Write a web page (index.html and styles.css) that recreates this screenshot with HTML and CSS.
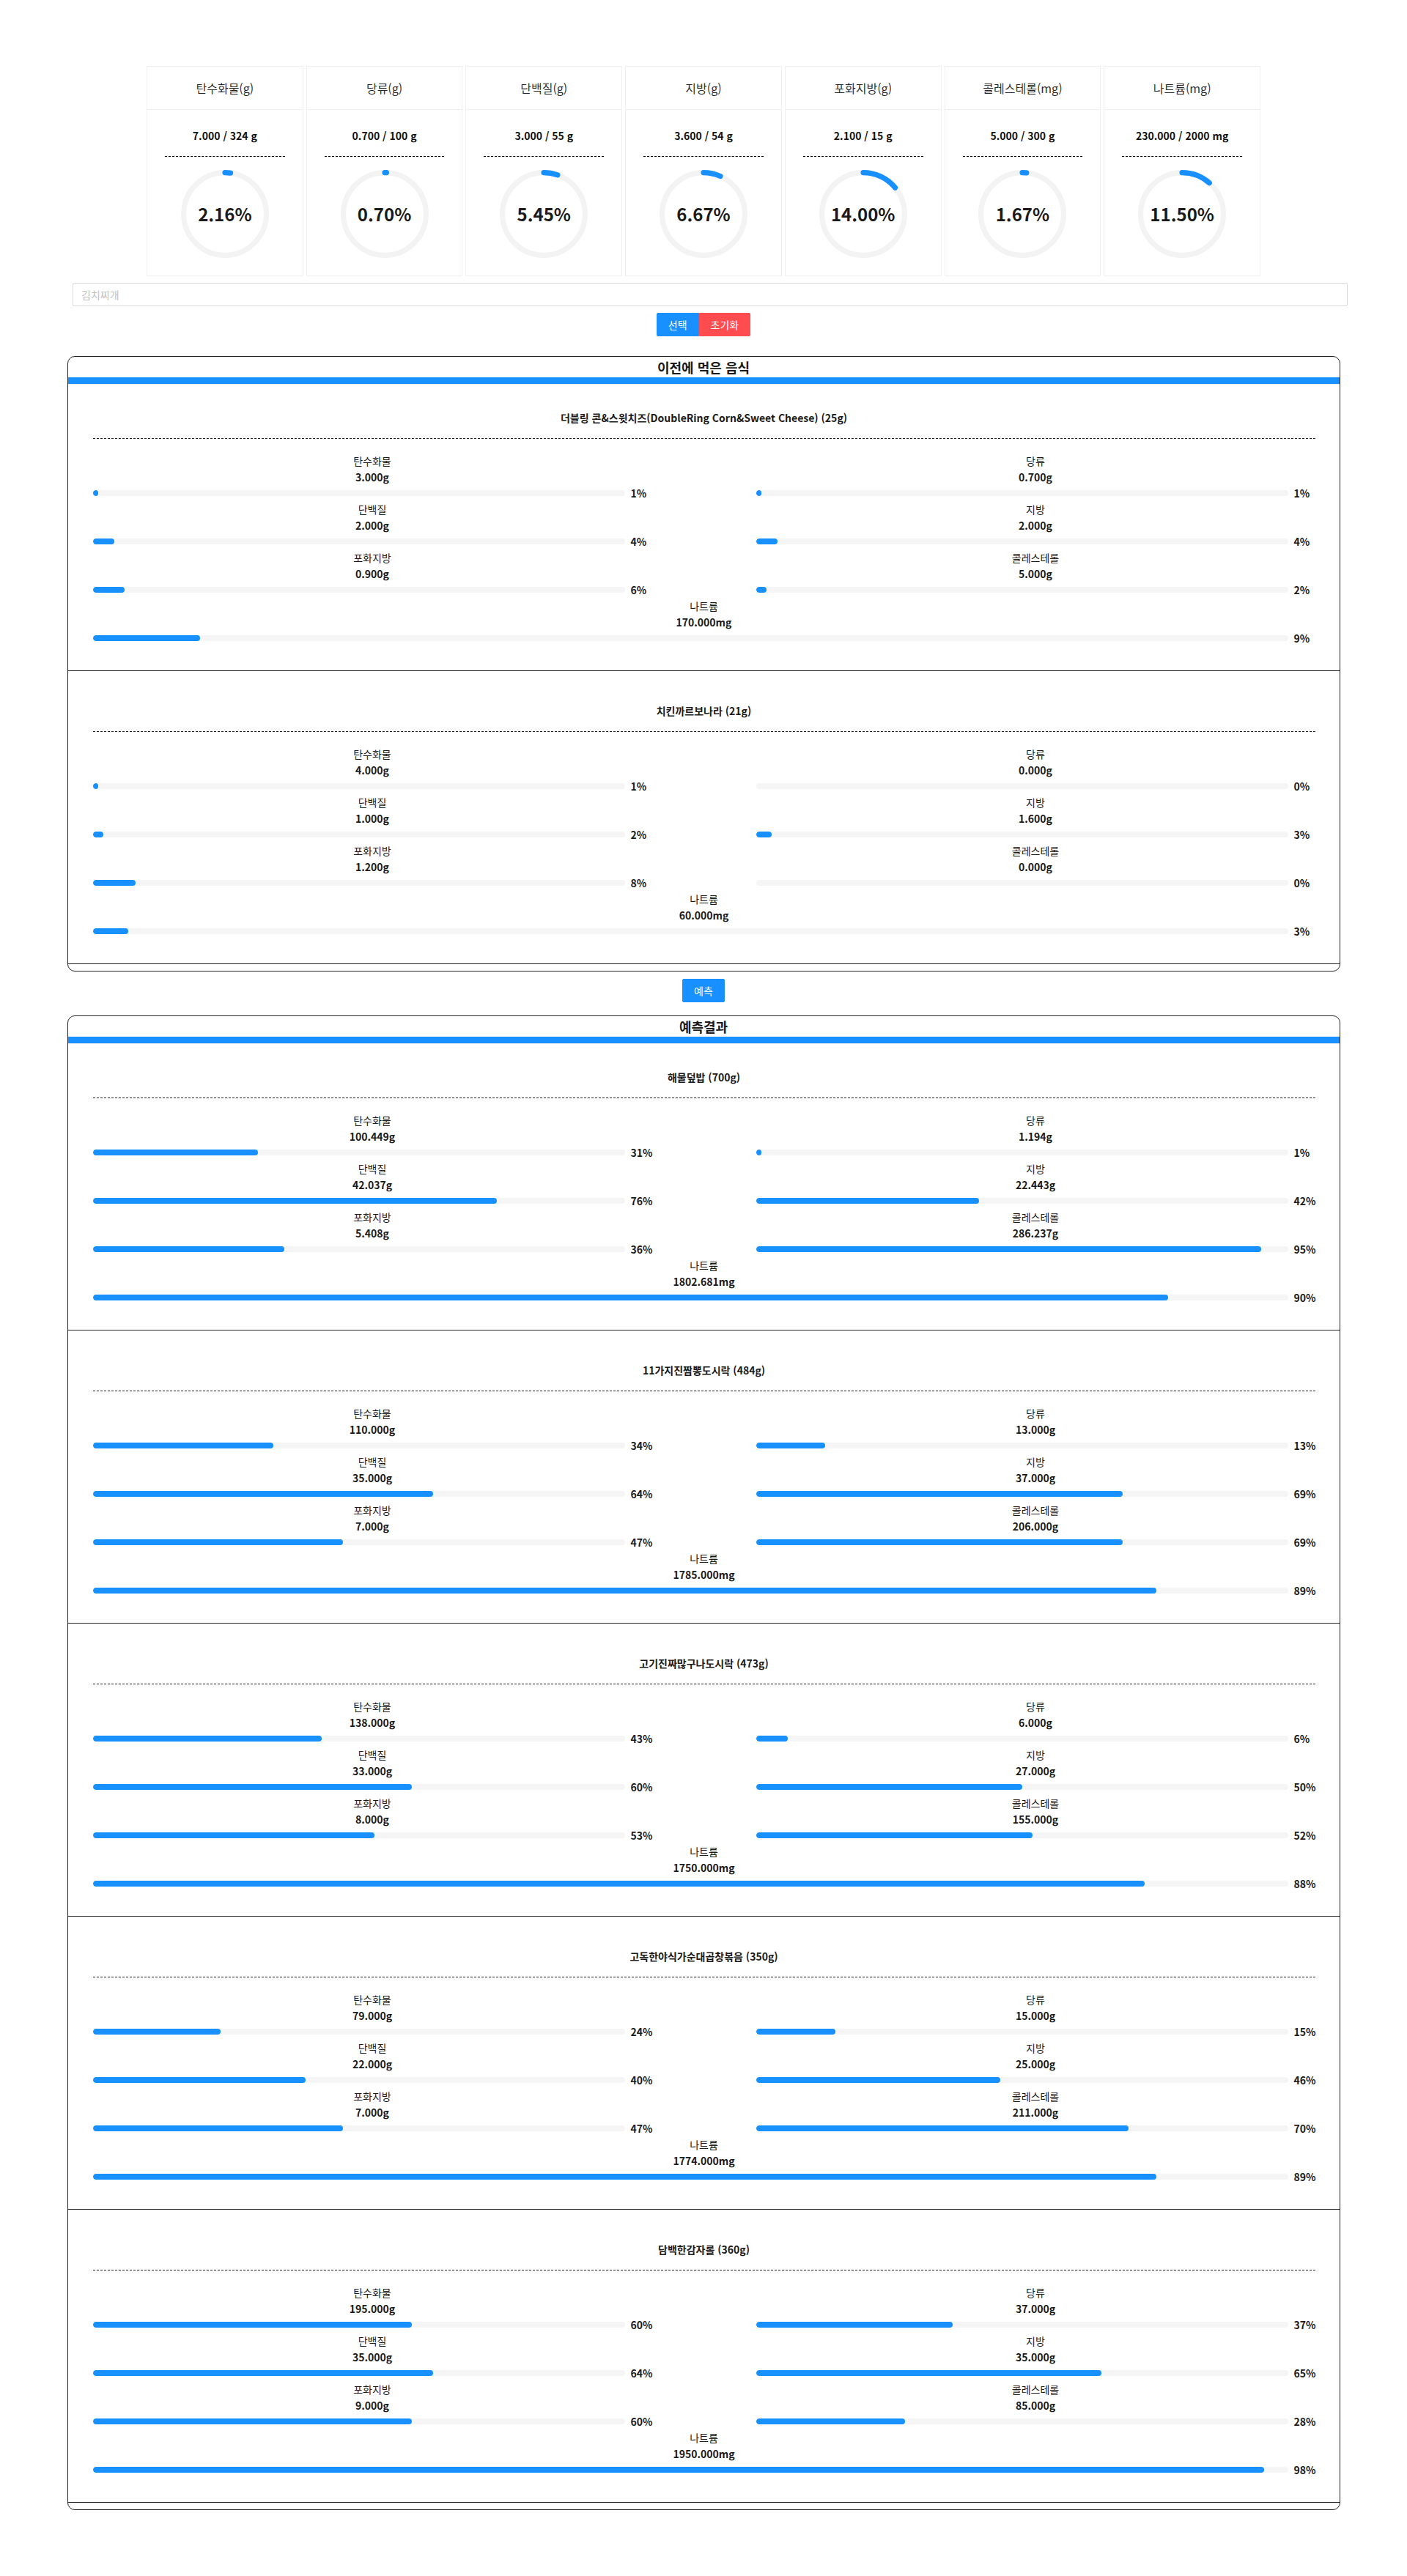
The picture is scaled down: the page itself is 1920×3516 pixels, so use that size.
FILE: index.html
```html
<!DOCTYPE html>
<html lang="ko">
<head>
<meta charset="utf-8">
<title>식단</title>
<link rel="stylesheet" href="styles.css">
</head>
<body>
<div class="page">
  <div class="summary">
    <div class="card"><div class="card-head">탄수화물(g)</div><div class="card-body"><div class="card-amount">7.000 / 324 g</div><div class="card-rule"></div><div class="ring"><svg viewBox="0 0 100 100" width="120" height="120"><circle class="ring-track" cx="50" cy="50" r="47"/><circle class="ring-fill" cx="50" cy="50" r="47" stroke-dasharray="6.38 300"/></svg><span class="ring-text">2.16%</span></div></div></div>
    <div class="card"><div class="card-head">당류(g)</div><div class="card-body"><div class="card-amount">0.700 / 100 g</div><div class="card-rule"></div><div class="ring"><svg viewBox="0 0 100 100" width="120" height="120"><circle class="ring-track" cx="50" cy="50" r="47"/><circle class="ring-fill" cx="50" cy="50" r="47" stroke-dasharray="2.07 300"/></svg><span class="ring-text">0.70%</span></div></div></div>
    <div class="card"><div class="card-head">단백질(g)</div><div class="card-body"><div class="card-amount">3.000 / 55 g</div><div class="card-rule"></div><div class="ring"><svg viewBox="0 0 100 100" width="120" height="120"><circle class="ring-track" cx="50" cy="50" r="47"/><circle class="ring-fill" cx="50" cy="50" r="47" stroke-dasharray="16.09 300"/></svg><span class="ring-text">5.45%</span></div></div></div>
    <div class="card"><div class="card-head">지방(g)</div><div class="card-body"><div class="card-amount">3.600 / 54 g</div><div class="card-rule"></div><div class="ring"><svg viewBox="0 0 100 100" width="120" height="120"><circle class="ring-track" cx="50" cy="50" r="47"/><circle class="ring-fill" cx="50" cy="50" r="47" stroke-dasharray="19.70 300"/></svg><span class="ring-text">6.67%</span></div></div></div>
    <div class="card"><div class="card-head">포화지방(g)</div><div class="card-body"><div class="card-amount">2.100 / 15 g</div><div class="card-rule"></div><div class="ring"><svg viewBox="0 0 100 100" width="120" height="120"><circle class="ring-track" cx="50" cy="50" r="47"/><circle class="ring-fill" cx="50" cy="50" r="47" stroke-dasharray="41.34 300"/></svg><span class="ring-text">14.00%</span></div></div></div>
    <div class="card"><div class="card-head">콜레스테롤(mg)</div><div class="card-body"><div class="card-amount">5.000 / 300 g</div><div class="card-rule"></div><div class="ring"><svg viewBox="0 0 100 100" width="120" height="120"><circle class="ring-track" cx="50" cy="50" r="47"/><circle class="ring-fill" cx="50" cy="50" r="47" stroke-dasharray="4.93 300"/></svg><span class="ring-text">1.67%</span></div></div></div>
    <div class="card"><div class="card-head">나트륨(mg)</div><div class="card-body"><div class="card-amount">230.000 / 2000 mg</div><div class="card-rule"></div><div class="ring"><svg viewBox="0 0 100 100" width="120" height="120"><circle class="ring-track" cx="50" cy="50" r="47"/><circle class="ring-fill" cx="50" cy="50" r="47" stroke-dasharray="33.96 300"/></svg><span class="ring-text">11.50%</span></div></div></div>
  </div>

  <div class="search-row"><input class="search" type="text" placeholder="김치찌개"></div>

  <div class="btn-row">
    <button class="btn btn-blue btn-left">선택</button><button class="btn btn-red btn-right">초기화</button>
  </div>

  <div class="section">
    <div class="section-title">이전에 먹은 음식</div>
    <div class="section-list">
      <div class="food">
        <div class="food-name">더블링 콘&amp;스윗치즈(DoubleRing Corn&amp;Sweet Cheese) (25g)</div>
        <div class="food-rule"></div>
        <div class="nutr-grid">
          <div class="nutr"><div class="nutr-label">탄수화물</div><div class="nutr-value">3.000g</div><div class="bar-row"><div class="bar-track"><div class="bar-fill" style="width:1%"></div></div><span class="bar-pct">1%</span></div></div>
          <div class="nutr"><div class="nutr-label">당류</div><div class="nutr-value">0.700g</div><div class="bar-row"><div class="bar-track"><div class="bar-fill" style="width:1%"></div></div><span class="bar-pct">1%</span></div></div>
          <div class="nutr"><div class="nutr-label">단백질</div><div class="nutr-value">2.000g</div><div class="bar-row"><div class="bar-track"><div class="bar-fill" style="width:4%"></div></div><span class="bar-pct">4%</span></div></div>
          <div class="nutr"><div class="nutr-label">지방</div><div class="nutr-value">2.000g</div><div class="bar-row"><div class="bar-track"><div class="bar-fill" style="width:4%"></div></div><span class="bar-pct">4%</span></div></div>
          <div class="nutr"><div class="nutr-label">포화지방</div><div class="nutr-value">0.900g</div><div class="bar-row"><div class="bar-track"><div class="bar-fill" style="width:6%"></div></div><span class="bar-pct">6%</span></div></div>
          <div class="nutr"><div class="nutr-label">콜레스테롤</div><div class="nutr-value">5.000g</div><div class="bar-row"><div class="bar-track"><div class="bar-fill" style="width:2%"></div></div><span class="bar-pct">2%</span></div></div>
          <div class="nutr full"><div class="nutr-label">나트륨</div><div class="nutr-value">170.000mg</div><div class="bar-row"><div class="bar-track"><div class="bar-fill" style="width:9%"></div></div><span class="bar-pct">9%</span></div></div>
        </div>
      </div>
      <div class="food">
        <div class="food-name">치킨까르보나라 (21g)</div>
        <div class="food-rule"></div>
        <div class="nutr-grid">
          <div class="nutr"><div class="nutr-label">탄수화물</div><div class="nutr-value">4.000g</div><div class="bar-row"><div class="bar-track"><div class="bar-fill" style="width:1%"></div></div><span class="bar-pct">1%</span></div></div>
          <div class="nutr"><div class="nutr-label">당류</div><div class="nutr-value">0.000g</div><div class="bar-row"><div class="bar-track"><div class="bar-fill" style="width:0%"></div></div><span class="bar-pct">0%</span></div></div>
          <div class="nutr"><div class="nutr-label">단백질</div><div class="nutr-value">1.000g</div><div class="bar-row"><div class="bar-track"><div class="bar-fill" style="width:2%"></div></div><span class="bar-pct">2%</span></div></div>
          <div class="nutr"><div class="nutr-label">지방</div><div class="nutr-value">1.600g</div><div class="bar-row"><div class="bar-track"><div class="bar-fill" style="width:3%"></div></div><span class="bar-pct">3%</span></div></div>
          <div class="nutr"><div class="nutr-label">포화지방</div><div class="nutr-value">1.200g</div><div class="bar-row"><div class="bar-track"><div class="bar-fill" style="width:8%"></div></div><span class="bar-pct">8%</span></div></div>
          <div class="nutr"><div class="nutr-label">콜레스테롤</div><div class="nutr-value">0.000g</div><div class="bar-row"><div class="bar-track"><div class="bar-fill" style="width:0%"></div></div><span class="bar-pct">0%</span></div></div>
          <div class="nutr full"><div class="nutr-label">나트륨</div><div class="nutr-value">60.000mg</div><div class="bar-row"><div class="bar-track"><div class="bar-fill" style="width:3%"></div></div><span class="bar-pct">3%</span></div></div>
        </div>
      </div>
    </div>
  </div>

  <div class="btn-row btn-row-predict">
    <button class="btn btn-blue">예측</button>
  </div>

  <div class="section section-result">
    <div class="section-title">예측결과</div>
    <div class="section-list">
      <div class="food">
        <div class="food-name">해물덮밥 (700g)</div>
        <div class="food-rule"></div>
        <div class="nutr-grid">
          <div class="nutr"><div class="nutr-label">탄수화물</div><div class="nutr-value">100.449g</div><div class="bar-row"><div class="bar-track"><div class="bar-fill" style="width:31%"></div></div><span class="bar-pct">31%</span></div></div>
          <div class="nutr"><div class="nutr-label">당류</div><div class="nutr-value">1.194g</div><div class="bar-row"><div class="bar-track"><div class="bar-fill" style="width:1%"></div></div><span class="bar-pct">1%</span></div></div>
          <div class="nutr"><div class="nutr-label">단백질</div><div class="nutr-value">42.037g</div><div class="bar-row"><div class="bar-track"><div class="bar-fill" style="width:76%"></div></div><span class="bar-pct">76%</span></div></div>
          <div class="nutr"><div class="nutr-label">지방</div><div class="nutr-value">22.443g</div><div class="bar-row"><div class="bar-track"><div class="bar-fill" style="width:42%"></div></div><span class="bar-pct">42%</span></div></div>
          <div class="nutr"><div class="nutr-label">포화지방</div><div class="nutr-value">5.408g</div><div class="bar-row"><div class="bar-track"><div class="bar-fill" style="width:36%"></div></div><span class="bar-pct">36%</span></div></div>
          <div class="nutr"><div class="nutr-label">콜레스테롤</div><div class="nutr-value">286.237g</div><div class="bar-row"><div class="bar-track"><div class="bar-fill" style="width:95%"></div></div><span class="bar-pct">95%</span></div></div>
          <div class="nutr full"><div class="nutr-label">나트륨</div><div class="nutr-value">1802.681mg</div><div class="bar-row"><div class="bar-track"><div class="bar-fill" style="width:90%"></div></div><span class="bar-pct">90%</span></div></div>
        </div>
      </div>
      <div class="food">
        <div class="food-name">11가지진짬뽕도시락 (484g)</div>
        <div class="food-rule"></div>
        <div class="nutr-grid">
          <div class="nutr"><div class="nutr-label">탄수화물</div><div class="nutr-value">110.000g</div><div class="bar-row"><div class="bar-track"><div class="bar-fill" style="width:34%"></div></div><span class="bar-pct">34%</span></div></div>
          <div class="nutr"><div class="nutr-label">당류</div><div class="nutr-value">13.000g</div><div class="bar-row"><div class="bar-track"><div class="bar-fill" style="width:13%"></div></div><span class="bar-pct">13%</span></div></div>
          <div class="nutr"><div class="nutr-label">단백질</div><div class="nutr-value">35.000g</div><div class="bar-row"><div class="bar-track"><div class="bar-fill" style="width:64%"></div></div><span class="bar-pct">64%</span></div></div>
          <div class="nutr"><div class="nutr-label">지방</div><div class="nutr-value">37.000g</div><div class="bar-row"><div class="bar-track"><div class="bar-fill" style="width:69%"></div></div><span class="bar-pct">69%</span></div></div>
          <div class="nutr"><div class="nutr-label">포화지방</div><div class="nutr-value">7.000g</div><div class="bar-row"><div class="bar-track"><div class="bar-fill" style="width:47%"></div></div><span class="bar-pct">47%</span></div></div>
          <div class="nutr"><div class="nutr-label">콜레스테롤</div><div class="nutr-value">206.000g</div><div class="bar-row"><div class="bar-track"><div class="bar-fill" style="width:69%"></div></div><span class="bar-pct">69%</span></div></div>
          <div class="nutr full"><div class="nutr-label">나트륨</div><div class="nutr-value">1785.000mg</div><div class="bar-row"><div class="bar-track"><div class="bar-fill" style="width:89%"></div></div><span class="bar-pct">89%</span></div></div>
        </div>
      </div>
      <div class="food">
        <div class="food-name">고기진짜많구나도시락 (473g)</div>
        <div class="food-rule"></div>
        <div class="nutr-grid">
          <div class="nutr"><div class="nutr-label">탄수화물</div><div class="nutr-value">138.000g</div><div class="bar-row"><div class="bar-track"><div class="bar-fill" style="width:43%"></div></div><span class="bar-pct">43%</span></div></div>
          <div class="nutr"><div class="nutr-label">당류</div><div class="nutr-value">6.000g</div><div class="bar-row"><div class="bar-track"><div class="bar-fill" style="width:6%"></div></div><span class="bar-pct">6%</span></div></div>
          <div class="nutr"><div class="nutr-label">단백질</div><div class="nutr-value">33.000g</div><div class="bar-row"><div class="bar-track"><div class="bar-fill" style="width:60%"></div></div><span class="bar-pct">60%</span></div></div>
          <div class="nutr"><div class="nutr-label">지방</div><div class="nutr-value">27.000g</div><div class="bar-row"><div class="bar-track"><div class="bar-fill" style="width:50%"></div></div><span class="bar-pct">50%</span></div></div>
          <div class="nutr"><div class="nutr-label">포화지방</div><div class="nutr-value">8.000g</div><div class="bar-row"><div class="bar-track"><div class="bar-fill" style="width:53%"></div></div><span class="bar-pct">53%</span></div></div>
          <div class="nutr"><div class="nutr-label">콜레스테롤</div><div class="nutr-value">155.000g</div><div class="bar-row"><div class="bar-track"><div class="bar-fill" style="width:52%"></div></div><span class="bar-pct">52%</span></div></div>
          <div class="nutr full"><div class="nutr-label">나트륨</div><div class="nutr-value">1750.000mg</div><div class="bar-row"><div class="bar-track"><div class="bar-fill" style="width:88%"></div></div><span class="bar-pct">88%</span></div></div>
        </div>
      </div>
      <div class="food">
        <div class="food-name">고독한야식가순대곱창볶음 (350g)</div>
        <div class="food-rule"></div>
        <div class="nutr-grid">
          <div class="nutr"><div class="nutr-label">탄수화물</div><div class="nutr-value">79.000g</div><div class="bar-row"><div class="bar-track"><div class="bar-fill" style="width:24%"></div></div><span class="bar-pct">24%</span></div></div>
          <div class="nutr"><div class="nutr-label">당류</div><div class="nutr-value">15.000g</div><div class="bar-row"><div class="bar-track"><div class="bar-fill" style="width:15%"></div></div><span class="bar-pct">15%</span></div></div>
          <div class="nutr"><div class="nutr-label">단백질</div><div class="nutr-value">22.000g</div><div class="bar-row"><div class="bar-track"><div class="bar-fill" style="width:40%"></div></div><span class="bar-pct">40%</span></div></div>
          <div class="nutr"><div class="nutr-label">지방</div><div class="nutr-value">25.000g</div><div class="bar-row"><div class="bar-track"><div class="bar-fill" style="width:46%"></div></div><span class="bar-pct">46%</span></div></div>
          <div class="nutr"><div class="nutr-label">포화지방</div><div class="nutr-value">7.000g</div><div class="bar-row"><div class="bar-track"><div class="bar-fill" style="width:47%"></div></div><span class="bar-pct">47%</span></div></div>
          <div class="nutr"><div class="nutr-label">콜레스테롤</div><div class="nutr-value">211.000g</div><div class="bar-row"><div class="bar-track"><div class="bar-fill" style="width:70%"></div></div><span class="bar-pct">70%</span></div></div>
          <div class="nutr full"><div class="nutr-label">나트륨</div><div class="nutr-value">1774.000mg</div><div class="bar-row"><div class="bar-track"><div class="bar-fill" style="width:89%"></div></div><span class="bar-pct">89%</span></div></div>
        </div>
      </div>
      <div class="food">
        <div class="food-name">담백한감자롤 (360g)</div>
        <div class="food-rule"></div>
        <div class="nutr-grid">
          <div class="nutr"><div class="nutr-label">탄수화물</div><div class="nutr-value">195.000g</div><div class="bar-row"><div class="bar-track"><div class="bar-fill" style="width:60%"></div></div><span class="bar-pct">60%</span></div></div>
          <div class="nutr"><div class="nutr-label">당류</div><div class="nutr-value">37.000g</div><div class="bar-row"><div class="bar-track"><div class="bar-fill" style="width:37%"></div></div><span class="bar-pct">37%</span></div></div>
          <div class="nutr"><div class="nutr-label">단백질</div><div class="nutr-value">35.000g</div><div class="bar-row"><div class="bar-track"><div class="bar-fill" style="width:64%"></div></div><span class="bar-pct">64%</span></div></div>
          <div class="nutr"><div class="nutr-label">지방</div><div class="nutr-value">35.000g</div><div class="bar-row"><div class="bar-track"><div class="bar-fill" style="width:65%"></div></div><span class="bar-pct">65%</span></div></div>
          <div class="nutr"><div class="nutr-label">포화지방</div><div class="nutr-value">9.000g</div><div class="bar-row"><div class="bar-track"><div class="bar-fill" style="width:60%"></div></div><span class="bar-pct">60%</span></div></div>
          <div class="nutr"><div class="nutr-label">콜레스테롤</div><div class="nutr-value">85.000g</div><div class="bar-row"><div class="bar-track"><div class="bar-fill" style="width:28%"></div></div><span class="bar-pct">28%</span></div></div>
          <div class="nutr full"><div class="nutr-label">나트륨</div><div class="nutr-value">1950.000mg</div><div class="bar-row"><div class="bar-track"><div class="bar-fill" style="width:98%"></div></div><span class="bar-pct">98%</span></div></div>
        </div>
      </div>
    </div>
  </div>
</div>
</body>
</html>
```

FILE: styles.css
```css
* { box-sizing: border-box; }

html, body {
  margin: 0;
  padding: 0;
  background: #fff;
}

body {
  font-family: "Noto Sans CJK KR", "Noto Sans", sans-serif;
  font-size: 14px;
  color: rgba(0, 0, 0, 0.85);
}

.page {
  padding: 90px 0 86px;
}

/* summary cards */
.summary {
  width: 1520px;
  margin: 0 auto;
  display: grid;
  grid-template-columns: repeat(7, 1fr);
  gap: 4px;
}

.card {
  border: 1px solid #f0f0f0;
  background: #fff;
}

.card-head {
  height: 59px;
  border-bottom: 1px solid #f0f0f0;
  display: flex;
  align-items: center;
  justify-content: center;
  font-size: 16px;
  color: rgba(0, 0, 0, 0.85);
}

.card-body {
  padding: 24px;
  text-align: center;
}

.card-amount {
  font-size: 14px;
  font-weight: 700;
  line-height: 22px;
  color: #111;
}

.card-rule {
  border-top: 1px dashed #000;
  margin: 17px 0 18px;
}

.ring {
  position: relative;
  width: 120px;
  height: 120px;
  margin: 0 auto;
}

.ring svg {
  display: block;
  transform: rotate(-90deg);
}

.ring-track {
  fill: none;
  stroke: #f3f3f3;
  stroke-width: 6;
}

.ring-fill {
  fill: none;
  stroke: #1890ff;
  stroke-width: 6;
  stroke-linecap: round;
}

.ring-text {
  position: absolute;
  left: 0;
  right: 0;
  top: 50%;
  transform: translateY(-50%);
  text-align: center;
  font-size: 24px;
  font-weight: 600;
  line-height: 1;
  color: #1a1a1a;
}

/* search */
.search-row {
  padding: 0 81px 0 99px;
  margin-top: 9px;
}

.search {
  display: block;
  width: 100%;
  height: 32px;
  padding: 4px 11px;
  border: 1px solid #d9d9d9;
  border-radius: 2px;
  font-family: inherit;
  font-size: 14px;
  color: rgba(0, 0, 0, 0.85);
  outline: none;
}

.search::placeholder {
  color: #bfbfbf;
}

/* buttons */
.btn-row {
  display: flex;
  justify-content: center;
  margin-top: 9px;
}

.btn {
  height: 32px;
  padding: 0 15px;
  border: 1px solid transparent;
  border-radius: 2px;
  font-family: inherit;
  font-size: 14px;
  line-height: 30px;
  color: #fff;
  cursor: pointer;
}

.btn-blue {
  background: #1890ff;
  border-color: #1890ff;
}

.btn-red {
  background: #ff4d4f;
  border-color: #ff4d4f;
}

.btn-left {
  border-top-right-radius: 0;
  border-bottom-right-radius: 0;
}

.btn-right {
  border-top-left-radius: 0;
  border-bottom-left-radius: 0;
}

.btn-row-predict {
  margin-top: 10px;
}

/* sections */
.section {
  width: 1737px;
  margin: 27px auto 0;
  border: 1px solid #222;
  border-radius: 10px;
  padding-bottom: 9px;
  overflow: hidden;
}

.section-result {
  margin-top: 18px;
}

.section-title {
  font-size: 18px;
  font-weight: 700;
  line-height: 28px;
  text-align: center;
  color: #1a1a1a;
  border-bottom: 9px solid #1890ff;
}

.section-list {
  border-top: 1px solid #eeeeee;
}

.food {
  padding: 34px 33px 33px 34px;
  border-bottom: 1px solid #222;
}

.food + .food {
  padding-top: 43px;
}

.food-name {
  text-align: center;
  font-size: 14px;
  font-weight: 700;
  line-height: 22px;
  color: #1a1a1a;
}

.food-rule {
  border-top: 1px dashed #222;
  margin: 17px 0 19px;
}

.nutr-grid {
  display: grid;
  grid-template-columns: 1fr 1fr;
  column-gap: 142px;
}

.nutr {
  text-align: center;
}

.nutr.full {
  grid-column: 1 / -1;
}

.nutr-label {
  line-height: 22px;
  font-size: 14px;
  color: #1a1a1a;
}

.nutr-value {
  line-height: 22px;
  font-size: 14px;
  font-weight: 700;
  color: #1a1a1a;
}

.bar-row {
  display: flex;
  align-items: center;
  height: 22px;
}

.bar-track {
  flex: 1;
  height: 8px;
  background: #f5f5f5;
  border-radius: 100px;
  overflow: hidden;
}

.bar-fill {
  height: 100%;
  background: #1890ff;
  border-radius: 100px;
}

.bar-pct {
  width: 29px;
  margin-left: 8px;
  text-align: left;
  font-size: 14px;
  font-weight: 600;
  white-space: nowrap;
  color: #1a1a1a;
}
```
